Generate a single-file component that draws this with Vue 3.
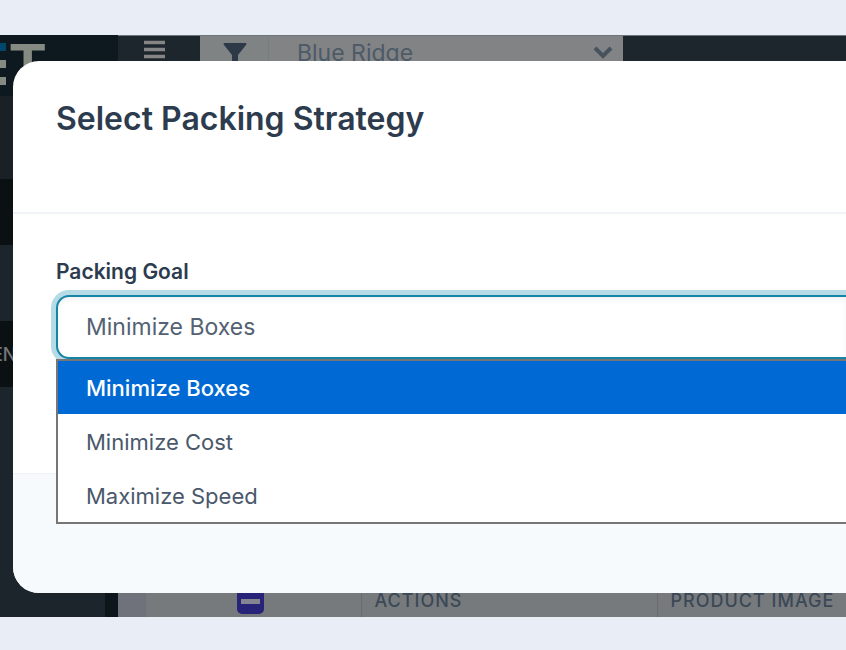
<script setup>
import { ref } from 'vue'

const goals = ['Minimize Boxes', 'Minimize Cost', 'Maximize Speed']
const goal = ref(goals[0])
const columns = ['Actions', 'Product image']
const allSelected = ref(true)
</script>

<template>
  <main class="page">
    <div class="frame">
      <div class="app">
        <aside class="sidebar">
          <div class="logo">
            <span class="bars"><i class="bar blue"></i><i class="bar"></i><i class="bar"></i></span>
            <span class="letter">T</span>
          </div>
          <nav class="menu">
            <span class="entry first"></span>
            <span class="entry dark"></span>
            <span class="entry mid"></span>
            <a class="entry dark" href="#">EN</a>
            <span class="entry rest"></span>
          </nav>
        </aside>
        <section class="content">
          <header class="topbar">
            <button class="icon-button" type="button" aria-label="Menu">
              <svg width="22" height="24" viewBox="0 0 22 24">
                <path d="M0 2.5h21M0 9.5h21M0 16.5h21" stroke="#858585" stroke-width="3.4" />
              </svg>
            </button>
            <button class="icon-button filter" type="button" aria-label="Filter">
              <svg width="24" height="24" viewBox="0 0 24 24">
                <path d="M1 0h22q1 1 0 2l-8 10v12l-6-5v-7L1 2q-1-1 0-2z" fill="#2d3947" />
              </svg>
            </button>
            <label class="site">
              <select class="site-select" aria-label="Site">
                <option>Blue Ridge</option>
              </select>
              <svg class="chevron" width="20" height="13" viewBox="0 0 20 13">
                <path d="M2 2l8 8 8-8" fill="none" stroke="#46525d" stroke-width="4" />
              </svg>
            </label>
          </header>
          <div class="space"></div>
          <table class="grid">
            <thead>
              <tr>
                <th class="gutter"></th>
                <th class="check">
                  <label class="tick">
                    <input v-model="allSelected" type="checkbox" aria-label="Select all" />
                  </label>
                </th>
                <th v-for="name in columns" :key="name" class="column">{{ name }}</th>
              </tr>
            </thead>
          </table>
        </section>
      </div>

      <div class="overlay">
        <form class="dialog" role="dialog" aria-labelledby="dialog-title" @submit.prevent>
          <header class="head">
            <h1 id="dialog-title" class="title">Select Packing Strategy</h1>
          </header>
          <div class="body">
            <label class="label" for="goal">Packing Goal</label>
            <div class="field">
              <select id="goal" v-model="goal" class="goal">
                <option v-for="g in goals" :key="g">{{ g }}</option>
              </select>
              <ul class="options" role="listbox" aria-label="Packing Goal">
                <li
                  v-for="g in goals"
                  :key="g"
                  class="option"
                  role="option"
                  :class="{ active: g === goal }"
                  :aria-selected="g === goal"
                  @click="goal = g"
                >{{ g }}</li>
              </ul>
            </div>
          </div>
          <footer class="foot"></footer>
        </form>
      </div>
    </div>
  </main>
</template>

<style>
body {
  background: #e9edf6;
}
</style>

<style scoped>
* {
  box-sizing: border-box;
}
.page {
  padding: 35px 0 33px;
  font-family: Inter, "Liberation Sans", sans-serif;
  color: #2d3b4e;
}
.frame {
  display: grid;
  overflow: hidden;
}
.app,
.overlay {
  grid-area: 1 / 1;
  min-width: 0;
}
.app {
  display: grid;
  grid-template-columns: 118px 1fr;
}
.sidebar {
  display: flex;
  flex-direction: column;
  background: #0d161b;
}
.logo {
  display: flex;
  gap: 4px;
  height: 61px;
  padding-top: 8px;
  background: #0d191e;
}
.bars {
  display: flex;
  flex-direction: column;
  gap: 9px;
  width: 6px;
}
.bar {
  height: 8px;
  flex: none;
  background: #858b82;
}
.blue {
  background: #00486b;
}
.letter {
  font: bold 58px/42px "Liberation Sans", sans-serif;
  color: #858b82;
}
.menu {
  display: flex;
  flex: 1;
  flex-direction: column;
  margin-right: 13px;
}
.entry {
  display: flex;
  align-items: center;
  height: 66px;
  margin-left: -8px;
  font-size: 18px;
  font-weight: 500;
  color: #74777a;
  text-decoration: none;
  background: #1b252b;
}
.first {
  height: 83px;
  background: #192127;
}
.dark {
  background: #0b1012;
}
.mid {
  height: 76px;
}
.rest {
  flex: 1;
}
.content {
  display: flex;
  flex-direction: column;
  min-width: 0;
}
.topbar {
  display: flex;
  height: 38px;
  background: #1d252d;
  border-top: 1px solid #6d7679;
}
.icon-button {
  display: flex;
  justify-content: center;
  width: 82px;
  padding: 4px 8px 0 0;
  border: 0;
  background: none;
}
.filter {
  width: 68px;
  padding: 7px 0 0 2px;
  background: #7f8384;
}
.site {
  display: flex;
  align-items: center;
  width: 355px;
  padding: 0 10px 4px 0;
  background: #828384;
  border-left: 1px solid #797c7e;
}
.site-select {
  flex: 1;
  padding: 0 0 0 28px;
  appearance: none;
  border: 0;
  background: none;
  font: 400 23px/32px Inter, sans-serif;
  color: #4d5a68;
}
.chevron {
  flex: none;
}
.space {
  flex: 1;
  background: #77797c;
}
.grid {
  width: 100%;
  table-layout: fixed;
  border-collapse: collapse;
  background: #777a7d;
}
.gutter {
  width: 28px;
  background: #70727b;
}
.check {
  width: 215px;
  padding: 0;
}
.tick {
  display: flex;
  justify-content: center;
}
.tick input {
  width: 27px;
  height: 26px;
  margin: 0 5px 0 0;
  appearance: none;
  border: solid #262378;
  border-width: 11px 4px 10px;
  border-radius: 5px;
  background: #858592;
}
.column {
  height: 32px;
  width: 296px;
  padding: 0 0 0 13px;
  border-left: 1px solid #696b6f;
  font-size: 18px;
  line-height: 32px;
  font-weight: 500;
  letter-spacing: 1px;
  text-align: left;
  text-transform: uppercase;
  white-space: nowrap;
  color: #3b4856;
}
.overlay {
  padding: 26px 0 24px 13px;
}
.dialog {
  overflow: hidden;
  background: #fff;
  border-radius: 26px 0 0 26px;
}
.head {
  padding: 38px 43px 73px;
  border-bottom: 2px solid #f0f4f8;
}
.title {
  margin: 0;
  font-size: 32px;
  line-height: 40px;
  font-weight: 600;
}
.body {
  padding: 43px 0 114px 43px;
}
.label {
  display: block;
  padding-bottom: 8px;
  font-size: 21px;
  line-height: 30px;
  font-weight: 600;
}
.field {
  position: relative;
}
.goal {
  display: block;
  width: 100%;
  height: 64px;
  padding: 0 28px;
  appearance: none;
  border: 2px solid #1685a5;
  border-right: 0;
  border-radius: 13px 0 0 13px;
  background: #fff;
  box-shadow: 0 0 0 5px #b7dbe6, inset 0 3px 5px #f3f3f3;
  font: 400 23px/30px Inter, sans-serif;
  color: #546172;
}
.options {
  position: absolute;
  top: 100%;
  left: 0;
  right: 0;
  display: grid;
  gap: 1px;
  margin: 0;
  padding: 0;
  list-style: none;
  background: #fff;
  border: 2px solid #767676;
  border-right: 0;
}
.option {
  padding: 1px 28px 0;
  font-size: 22px;
  line-height: 52px;
  color: #4a586b;
}
.active {
  font-weight: 500;
  color: #fff;
  background: #0069d3;
}
.foot {
  height: 120px;
  background: #f6fafd;
  border-top: 1px solid #f0f4f8;
}
</style>
